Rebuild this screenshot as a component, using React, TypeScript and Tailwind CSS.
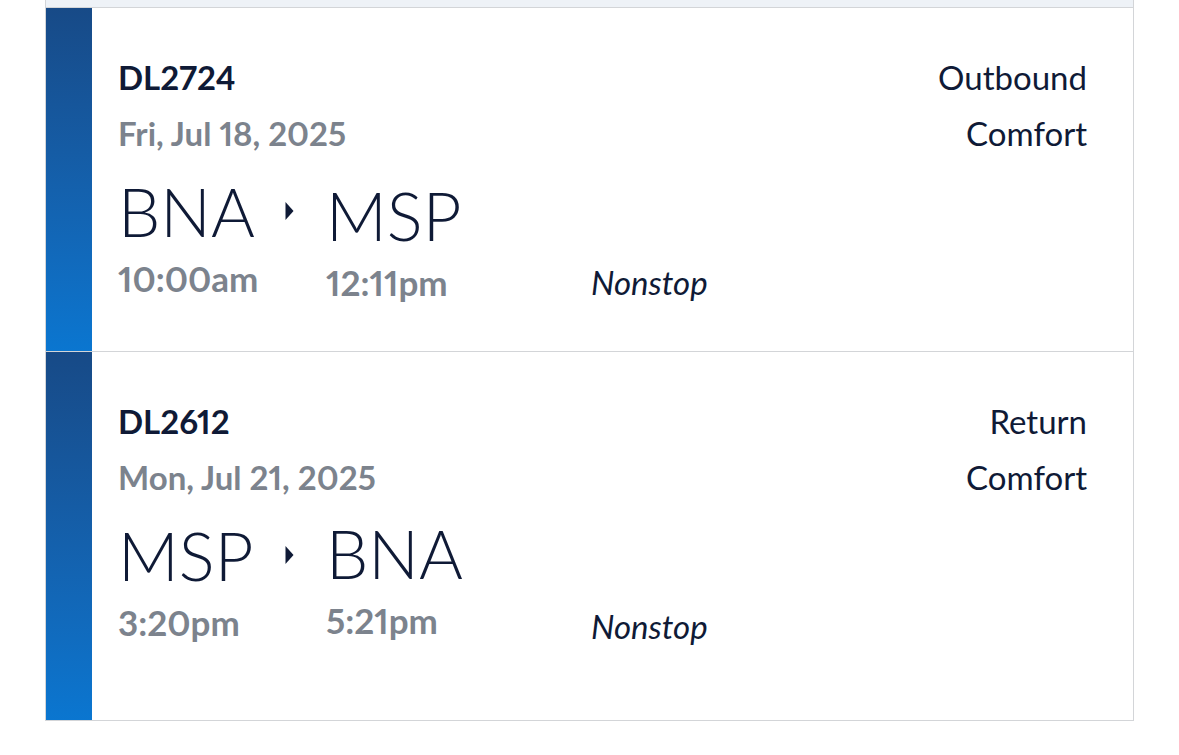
import React from 'react';

type Flight = {
  num: string;
  date: string;
  from: string;
  to: string;
  dep: string;
  arr: string;
  dir: string;
  cabin: string;
  arrShift: string;
  cardH: string;
};

const flights: Flight[] = [
  {
    num: 'DL2724',
    date: 'Fri, Jul 18, 2025',
    from: 'BNA',
    to: 'MSP',
    dep: '10:00am',
    arr: '12:11pm',
    dir: 'Outbound',
    cabin: 'Comfort',
    arrShift: 'mt-[4px]',
    cardH: 'h-[344px]',
  },
  {
    num: 'DL2612',
    date: 'Mon, Jul 21, 2025',
    from: 'MSP',
    to: 'BNA',
    dep: '3:20pm',
    arr: '5:21pm',
    dir: 'Return',
    cabin: 'Comfort',
    arrShift: '-mt-[2px]',
    cardH: 'h-[369px]',
  },
];

function Caret() {
  return (
    <svg width="9" height="20" viewBox="0 0 9 20" className="shrink-0">
      <path d="M0.5 1 L8.5 10 L0.5 19 Z" fill="#0f1a36" />
    </svg>
  );
}

function FlightCard({ f }: { f: Flight }) {
  return (
    <div className={`flex border-b border-[#d3d5d8] ${f.cardH}`}>
      <div className="w-[46px] shrink-0 bg-gradient-to-b from-[#174a87] to-[#0a76d0]" />
      <div className="flex-1 pl-[26px] pr-[46px] pt-[41px] proportional-nums">
        <div className="flex justify-between">
          <div>
            <div className="text-[33px] leading-[56px] font-bold text-[#0f1a36]">{f.num}</div>
            <div className="text-[33px] leading-[56px] font-bold text-[#7c838d]">{f.date}</div>
          </div>
          <div className="text-right">
            <div className="text-[33px] leading-[56px] text-[#0f1a36]">{f.dir}</div>
            <div className="text-[33px] leading-[56px] text-[#0f1a36]">{f.cabin}</div>
          </div>
        </div>
        <div className="flex items-start mt-[12px]">
          <div className="w-[208px]">
            <div className="flex items-center">
              <div className="w-[167px] text-[67px] leading-[76px] font-light text-[#0f1a36]">{f.from}</div>
              <Caret />
            </div>
            <div className="mt-[9px] text-[35px] leading-[40px] font-bold text-[#7c838d]">{f.dep}</div>
          </div>
          <div className={`w-[265px] ${f.arrShift}`}>
            <div className="text-[67px] leading-[76px] font-light text-[#0f1a36]">{f.to}</div>
            <div className="mt-[9px] text-[35px] leading-[40px] font-bold text-[#7c838d]">{f.arr}</div>
          </div>
          <div className="mt-[89px] text-[33px] leading-[40px] italic text-[#0f1a36]">Nonstop</div>
        </div>
      </div>
    </div>
  );
}

export default function App() {
  return (
    <div className="w-[1179px] h-[755px] bg-white" style={{ fontFamily: 'Lato, "Open Sans", sans-serif' }}>
      <div className="ml-[45px] w-[1089px] border-x border-[#d3d5d8]">
        <div className="h-[8px] bg-[#eef2f7] border-b border-[#d3d5d8]" />
        {flights.map((f) => (
          <FlightCard key={f.num} f={f} />
        ))}
      </div>
    </div>
  );
}
